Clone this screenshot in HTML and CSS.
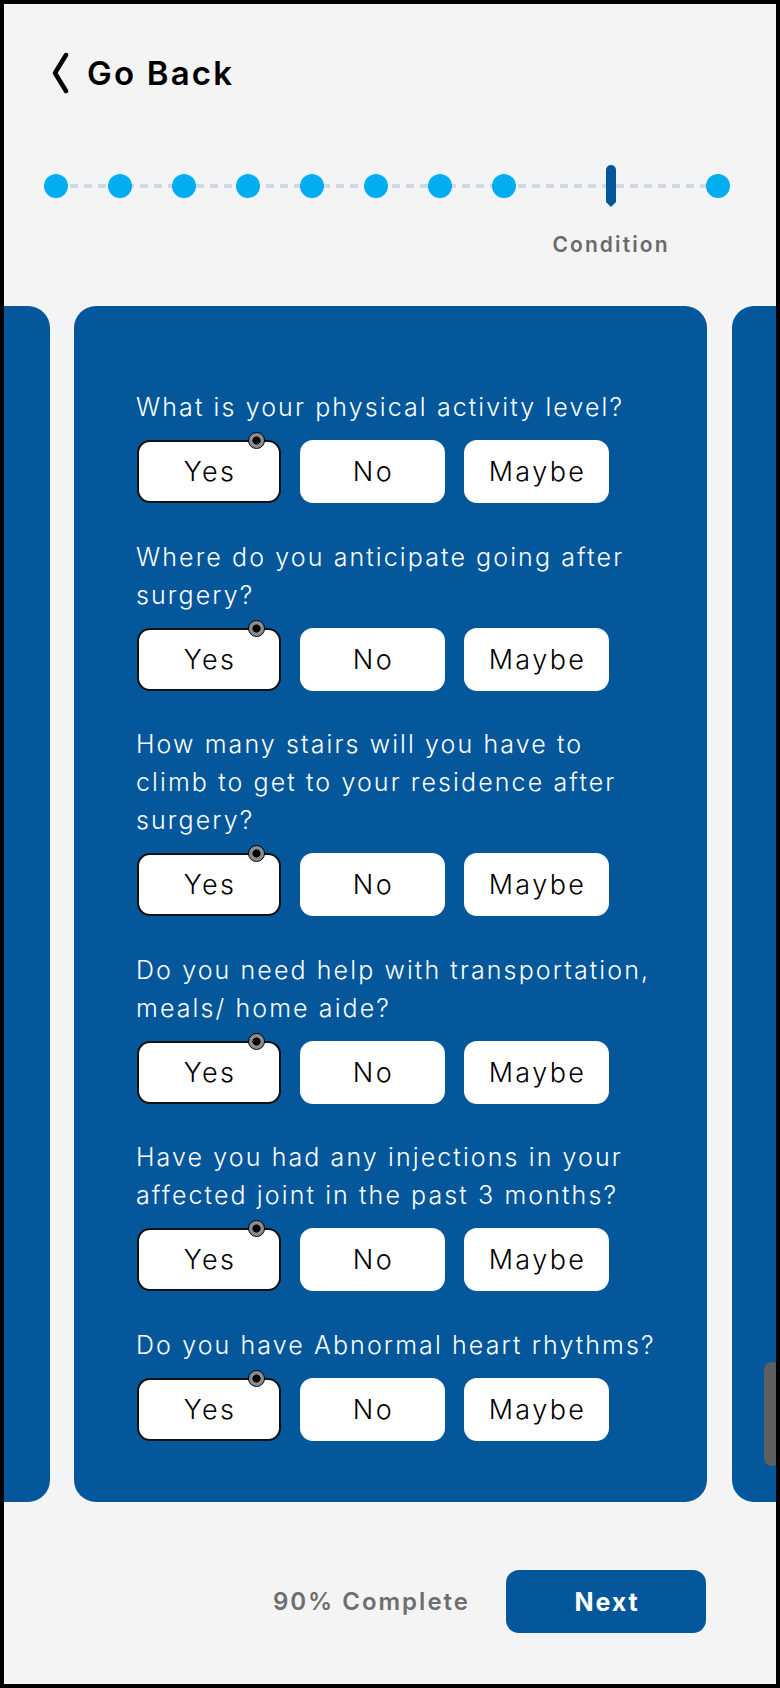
FILE: index.html
```html
<!DOCTYPE html>
<html lang="en">
<head>
<meta charset="utf-8">
<title>Questionnaire</title>
<link rel="stylesheet" href="styles.css">
</head>
<body>
<div class="screen">
  <header class="header">
    <a class="back" href="#">
      <svg class="back-icon" width="20" height="42" viewBox="0 0 20 42"><path d="M16 3 L5 21 L16 39" fill="none" stroke="#000" stroke-width="4.5" stroke-linecap="round" stroke-linejoin="round"/></svg>
      <span>Go Back</span>
    </a>
  </header>

  <div class="progress">
    <div class="steps">
      <span class="dot"></span>
      <span class="dot"></span>
      <span class="dot"></span>
      <span class="dot"></span>
      <span class="dot"></span>
      <span class="dot"></span>
      <span class="dot"></span>
      <span class="dot"></span>
      <div class="current">
        <span class="marker"></span>
        <span class="step-label">Condition</span>
      </div>
      <span class="dot"></span>
    </div>
  </div>

  <div class="carousel">
    <div class="card peek peek-left"></div>
    <div class="card main">
      <div class="q">
        <p class="q-text">What is your physical activity level?</p>
        <div class="options">
          <button class="opt selected">Yes<span class="pin"></span></button>
          <button class="opt">No</button>
          <button class="opt">Maybe</button>
        </div>
      </div>
      <div class="q">
        <p class="q-text">Where do you anticipate going after<br>surgery?</p>
        <div class="options">
          <button class="opt selected">Yes<span class="pin"></span></button>
          <button class="opt">No</button>
          <button class="opt">Maybe</button>
        </div>
      </div>
      <div class="q">
        <p class="q-text">How many stairs will you have to<br>climb to get to your residence after<br>surgery?</p>
        <div class="options">
          <button class="opt selected">Yes<span class="pin"></span></button>
          <button class="opt">No</button>
          <button class="opt">Maybe</button>
        </div>
      </div>
      <div class="q">
        <p class="q-text">Do you need help with transportation,<br>meals/ home aide?</p>
        <div class="options">
          <button class="opt selected">Yes<span class="pin"></span></button>
          <button class="opt">No</button>
          <button class="opt">Maybe</button>
        </div>
      </div>
      <div class="q">
        <p class="q-text">Have you had any injections in your<br>affected joint in the past 3 months?</p>
        <div class="options">
          <button class="opt selected">Yes<span class="pin"></span></button>
          <button class="opt">No</button>
          <button class="opt">Maybe</button>
        </div>
      </div>
      <div class="q">
        <p class="q-text">Do you have Abnormal heart rhythms?</p>
        <div class="options">
          <button class="opt selected">Yes<span class="pin"></span></button>
          <button class="opt">No</button>
          <button class="opt">Maybe</button>
        </div>
      </div>
    </div>
    <div class="card peek peek-right"><span class="scrollbar"></span></div>
  </div>

  <footer class="footer">
    <span class="complete">90% Complete</span>
    <button class="next">Next</button>
  </footer>
</div>
</body>
</html>
```

FILE: styles.css
```css
* { box-sizing: border-box; }

html, body {
  margin: 0;
  padding: 0;
  background: #000;
}

body {
  font-family: "Inter", "Noto Sans", sans-serif;
}

.screen {
  width: 780px;
  height: 1688px;
  border: 4px solid #000;
  background: #f4f4f4;
  overflow: hidden;
  display: flex;
  flex-direction: column;
}

/* Header */
.header {
  padding: 48px 0 0 46px;
  height: 94px;
}

.back {
  display: flex;
  align-items: center;
  gap: 17px;
  color: #000;
  text-decoration: none;
  font-size: 33px;
  font-weight: 600;
  letter-spacing: 2.2px;
  height: 42px;
}

.back-icon { display: block; flex: none; }

/* Progress */
.progress {
  margin-top: 67px;
  padding-left: 40px;
}

.steps {
  position: relative;
  display: flex;
  align-items: flex-start;
  gap: 40px;
}

.steps::before {
  content: "";
  position: absolute;
  left: 12px;
  width: 662px;
  top: 19px;
  height: 4px;
  background: repeating-linear-gradient(90deg, #cddbe8 0 8px, transparent 8px 14px);
}

.dot {
  position: relative;
  flex: none;
  width: 24px;
  height: 24px;
  margin-top: 9px;
  border-radius: 50%;
  background: #00adef;
}

.current {
  position: relative;
  flex: none;
  width: 10px;
  margin: 0 50px;
  display: flex;
  flex-direction: column;
  align-items: center;
}

.marker {
  width: 10px;
  height: 42px;
  background: #02579a;
  border-radius: 5px 5px 0 0;
  clip-path: polygon(0 0, 100% 0, 100% 88%, 50% 100%, 0 88%);
}

.step-label {
  margin-top: 25px;
  white-space: nowrap;
  font-size: 21px;
  font-weight: 600;
  color: #6b6b6b;
  letter-spacing: 2.1px;
}

/* Carousel */
.carousel {
  margin-top: 49px;
  display: flex;
  gap: 24px;
  height: 1196px;
}

.card {
  background: #03579a;
  border-radius: 22px;
  flex: none;
}

.peek-left {
  width: 46px;
  border-radius: 0 22px 22px 0;
}

.peek-right {
  position: relative;
  width: 45px;
  margin-left: 1px;
  border-radius: 22px 0 0 22px;
}

.scrollbar {
  position: absolute;
  left: 32px;
  top: 1056px;
  width: 16px;
  height: 104px;
  border-radius: 8px;
  background: #5f5f5f;
}

.main {
  width: 633px;
  padding: 82px 0 0 62px;
  display: flex;
  flex-direction: column;
  gap: 34.5px;
}

.q-text {
  margin: 0 0 14px;
  color: #fff;
  font-size: 25px;
  font-weight: 300;
  line-height: 38px;
  letter-spacing: 2.1px;
  white-space: nowrap;
}

.options {
  display: flex;
  gap: 19px;
  padding-left: 1px;
}

.opt {
  position: relative;
  width: 145px;
  height: 63px;
  border: none;
  border-radius: 13px;
  background: #fff;
  color: #000;
  font-family: "Inter", "Noto Sans", sans-serif;
  font-size: 27px;
  font-weight: 300;
  letter-spacing: 2.4px;
  padding: 0 0 0 2px;
  cursor: pointer;
}

.opt.selected {
  width: 144px;
  border: 2px solid #111;
}

.pin {
  position: absolute;
  top: -10px;
  right: 14px;
  width: 17px;
  height: 17px;
  border-radius: 50%;
  border: 1.5px solid #000;
  background: radial-gradient(circle, #000 0 3.8px, #8c8c8c 4.3px);
}

/* Footer */
.footer {
  margin-top: 68px;
  display: flex;
  justify-content: flex-end;
  align-items: center;
  gap: 36px;
  padding-right: 70px;
}

.complete {
  font-size: 24px;
  font-weight: 600;
  color: #6e6e6e;
  letter-spacing: 2px;
}

.next {
  width: 200px;
  height: 63px;
  border: none;
  border-radius: 13px;
  background: #03579a;
  color: #fff;
  font-family: "Inter", "Noto Sans", sans-serif;
  font-size: 25px;
  font-weight: 700;
  letter-spacing: 1.9px;
  padding: 0 0 0 2px;
  cursor: pointer;
}
```
